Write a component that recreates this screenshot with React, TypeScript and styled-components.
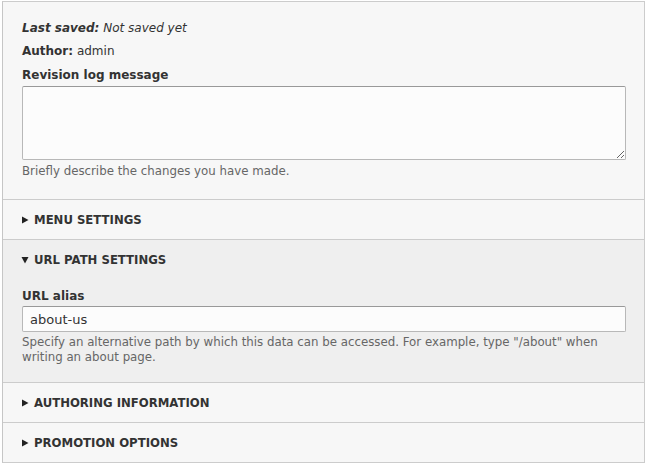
import styled, { createGlobalStyle } from 'styled-components';

const GlobalStyle = createGlobalStyle`
  body {
    margin: 0;
    background: #fff;
    font-family: "DejaVu Sans", Verdana, sans-serif;
    color: #333;
  }
`;

const Page = styled.div`
  margin: 1px 1px 1px 2px;
  border: 1px solid #ccc;
  border-left-color: #c6c6c6;
`;

const Panel = styled.div<{ $open?: boolean }>`
  background: ${(p) => (p.$open ? '#efefef' : '#f7f7f7')};
  border-top: 1px solid #ccc;
  &:first-child {
    border-top: none;
  }
`;

const RevisionBody = styled.div`
  padding: 17px 20px 19px 19px;
`;

const Line = styled.div<{ $gap?: number }>`
  font-size: 12px;
  line-height: 18px;
  margin-top: ${(p) => p.$gap ?? 0}px;
  color: #333;
  em {
    font-style: italic;
  }
  strong {
    font-weight: bold;
  }
`;

const Label = styled.div<{ $gap?: number }>`
  font-size: 12px;
  font-weight: bold;
  line-height: 18px;
  margin-top: ${(p) => p.$gap ?? 0}px;
  color: #333;
`;

const TextArea = styled.textarea`
  display: block;
  box-sizing: border-box;
  width: 604px;
  height: 74px;
  margin-top: 2px;
  border: 1px solid #b8b8b8;
  border-top-color: #999;
  border-radius: 2px;
  background: #fcfcfc;
  resize: vertical;
  font: inherit;
`;

const TextInput = styled.input`
  display: block;
  box-sizing: border-box;
  width: 604px;
  height: 26px;
  margin-top: 1px;
  padding: 0 7px;
  border: 1px solid #b8b8b8;
  border-top-color: #999;
  border-radius: 2px;
  background: #fcfcfc;
  font-family: "DejaVu Sans", Verdana, sans-serif;
  font-size: 13px;
  color: #333;
`;

const Description = styled.div<{ $gap?: number; $lh?: number }>`
  font-size: 11.8px;
  line-height: ${(p) => p.$lh ?? 15}px;
  margin-top: ${(p) => p.$gap ?? 0}px;
  color: #666;
  max-width: 604px;
`;

const Summary = styled.div`
  display: flex;
  align-items: center;
  gap: 5px;
  height: 39px;
  padding-left: 18px;
  font-size: 11.7px;
  font-weight: bold;
  text-transform: uppercase;
  color: #333;
`;

const Arrow = styled.svg`
  width: 8px;
  height: 8px;
  fill: #222;
`;

const PanelBody = styled.div`
  padding: 8px 20px 17px 19px;
`;

const Toggle = ({ open }: { open?: boolean }) => (
  <Arrow viewBox="0 0 8 8">
    {open ? <polygon points="0.5,1 7.5,1 4,7.5" /> : <polygon points="1,0.5 7.5,4 1,7.5" />}
  </Arrow>
);

const sections = [
  { title: 'Menu settings', open: false },
  { title: 'URL path settings', open: true },
  { title: 'Authoring information', open: false },
  { title: 'Promotion options', open: false },
];

const App = () => {
  return (
    <>
      <GlobalStyle />
      <Page>
        <Panel>
          <RevisionBody>
            <Line>
              <em>
                <strong>Last saved:</strong> Not saved yet
              </em>
            </Line>
            <Line $gap={5}>
              <strong>Author:</strong> admin
            </Line>
            <Label $gap={6}>Revision log message</Label>
            <TextArea />
            <Description $gap={2} $lh={18}>
              Briefly describe the changes you have made.
            </Description>
          </RevisionBody>
        </Panel>
        {sections.map((s) => (
          <Panel key={s.title} $open={s.open}>
            <Summary>
              <Toggle open={s.open} />
              {s.title}
            </Summary>
            {s.open && (
              <PanelBody>
                <Label>URL alias</Label>
                <TextInput defaultValue="about-us" />
                <Description $gap={3}>
                  Specify an alternative path by which this data can be accessed. For example, type
                  "/about" when writing an about page.
                </Description>
              </PanelBody>
            )}
          </Panel>
        ))}
      </Page>
    </>
  );
};

export default App;
